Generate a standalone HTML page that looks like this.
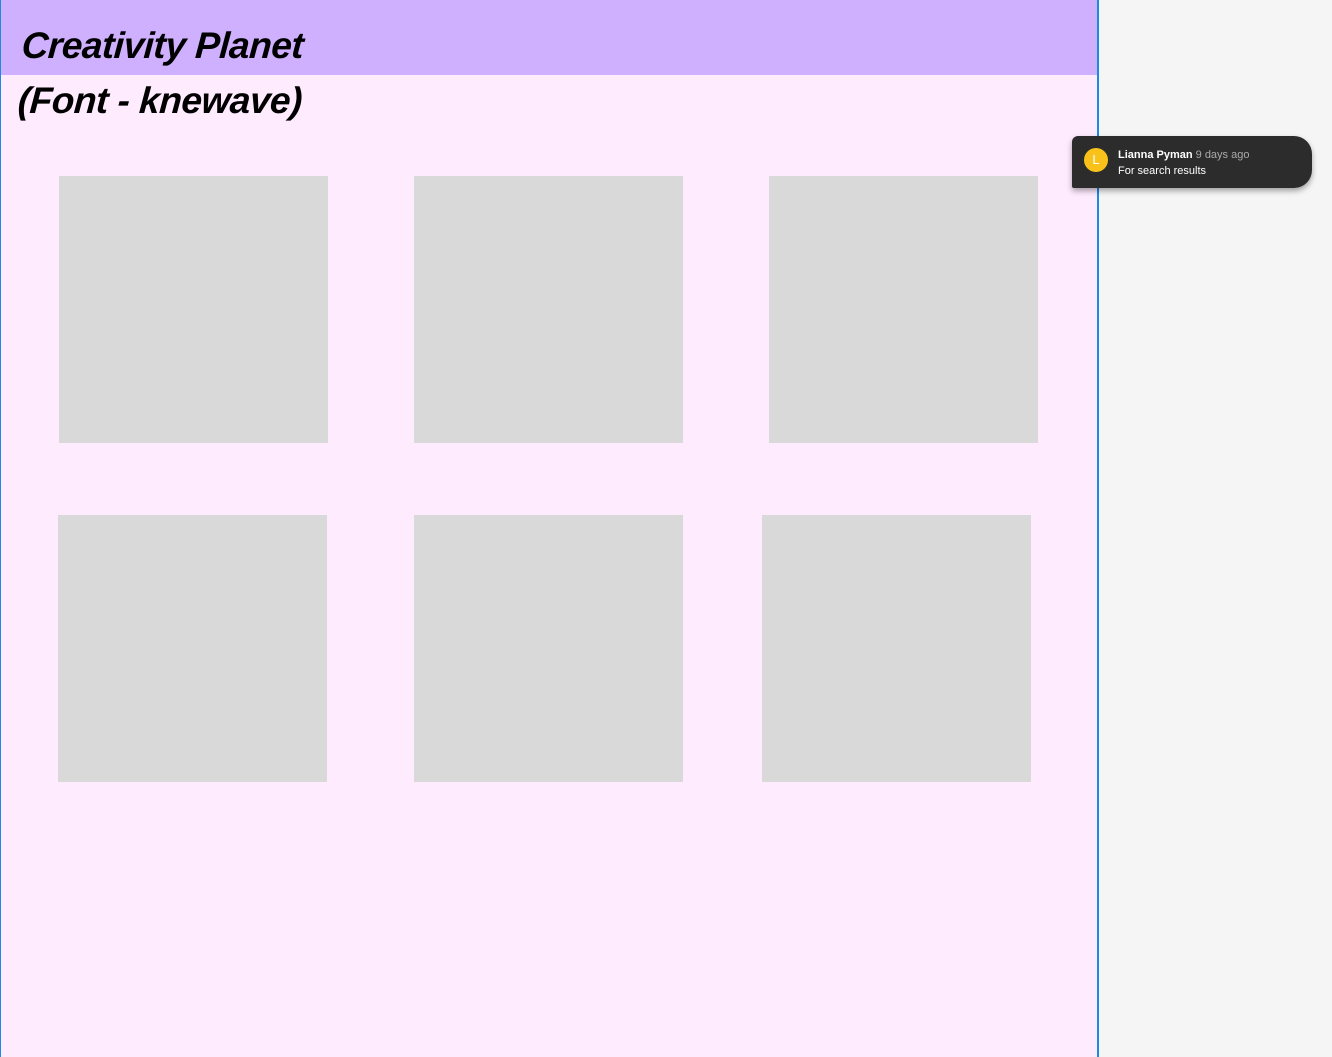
<!DOCTYPE html>
<html><head><meta charset="utf-8"><style>
body{margin:0;width:1332px;height:1057px;background:#f5f5f5;position:relative;overflow:hidden;font-family:"Liberation Sans",sans-serif}
#frame{position:absolute;left:0;top:0;width:1099px;height:1057px;background:#feebfe;border-left:1px solid #1e88e5;border-right:2px solid #1e88e5;box-sizing:border-box}
#bar{position:absolute;left:1px;top:0;width:1096px;height:75px;background:#cfb0fe}
h1{position:absolute;left:20px;top:18px;margin:0;font-size:37px;line-height:55px;font-weight:bold;font-style:italic;letter-spacing:-0.5px;color:#000;transform:skewX(-4deg)}
.b{position:absolute;width:269px;height:267px;background:#d9d9d9}
#c{position:absolute;left:1072px;top:136px;width:240px;height:52px;background:#2c2c2c;border-radius:6px 18px 18px 2px;box-shadow:0 3px 6px rgba(0,0,0,.35);color:#fff;font-size:11px}
#av{position:absolute;left:12px;top:12px;width:24px;height:24px;border-radius:50%;background:#f9c21a;color:#fff;font-size:13px;text-align:center;line-height:24px}
</style></head><body>
<div id="frame"></div><div id="bar"></div>
<h1>Creativity Planet<br>(Font - knewave)</h1>
<div class="b" style="left:59px;top:176px"></div>
<div class="b" style="left:414px;top:176px"></div>
<div class="b" style="left:769px;top:176px"></div>
<div class="b" style="left:58px;top:515px"></div>
<div class="b" style="left:414px;top:515px"></div>
<div class="b" style="left:762px;top:515px"></div>
<div id="c"><div id="av">L</div>
<div style="position:absolute;left:46px;top:13px;white-space:nowrap"><b>Lianna Pyman</b> <span style="color:#aaa">9 days ago</span></div>
<div style="position:absolute;left:46px;top:29px">For search results</div></div>
</body></html>
